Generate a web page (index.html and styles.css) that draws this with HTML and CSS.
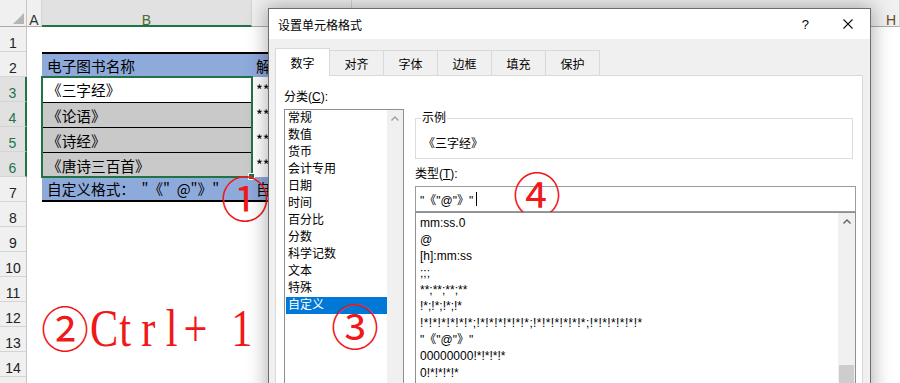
FILE: index.html
```html
<!DOCTYPE html>
<html lang="zh-CN">
<head>
<meta charset="utf-8">
<title>设置单元格格式</title>
<link rel="stylesheet" href="styles.css">
</head>
<body>
<div class="screen">
  <div class="sheet">
    <div class="corner"><span class="tri"></span></div>
    <div class="ch">A</div>
    <div class="ch sel">B</div>
    <div class="ch"></div>
    <div class="ch rest">H</div>

    <div class="rh">1</div><div class="c"></div><div class="c"></div><div class="c"></div><div class="c"></div>
    <div class="rh">2</div><div class="c"></div><div class="c txt blue t2">电子图书名称</div><div class="c txt cc blue t2">解</div><div class="c"></div>
    <div class="rh on">3</div><div class="c"></div><div class="c txt">《三字经》</div><div class="c txt cc">**</div><div class="c"></div>
    <div class="rh on">4</div><div class="c"></div><div class="c txt grey">《论语》</div><div class="c txt cc">**</div><div class="c"></div>
    <div class="rh on">5</div><div class="c"></div><div class="c txt grey">《诗经》</div><div class="c txt cc">**</div><div class="c"></div>
    <div class="rh on">6</div><div class="c"></div><div class="c txt grey">《唐诗三百首》</div><div class="c txt cc">**</div><div class="c"></div>
    <div class="rh">7</div><div class="c"></div><div class="c txt blue b2">自定义格式：&nbsp;&nbsp;"《"&nbsp;&nbsp;@"》"</div><div class="c txt cc blue b2">自</div><div class="c"></div>
    <div class="rh">8</div><div class="c"></div><div class="c"></div><div class="c"></div><div class="c"></div>
    <div class="rh">9</div><div class="c"></div><div class="c"></div><div class="c"></div><div class="c"></div>
    <div class="rh">10</div><div class="c"></div><div class="c"></div><div class="c"></div><div class="c"></div>
    <div class="rh">11</div><div class="c"></div><div class="c"></div><div class="c"></div><div class="c"></div>
    <div class="rh">12</div><div class="c"></div><div class="c"></div><div class="c"></div><div class="c"></div>
    <div class="rh">13</div><div class="c"></div><div class="c"></div><div class="c"></div><div class="c"></div>
    <div class="rh">14</div><div class="c"></div><div class="c"></div><div class="c"></div><div class="c"></div>
    <div class="rh"></div><div class="c"></div><div class="c"></div><div class="c"></div><div class="c"></div>
  </div>

  <div class="selbox"></div>
  <div class="handle"></div>

  <div class="anno a1">①</div>
  <div class="anno a2"><span class="circ">②</span><span class="ctrl"><span>C</span><span>t</span><span>r</span><span>l</span><span>+</span><span>&nbsp;</span><span>1</span></span></div>

  <div class="dialog">
    <div class="titlebar">
      <span class="title">设置单元格格式</span>
      <span class="help">?</span>
      <svg class="close" width="10" height="10" viewBox="0 0 10 10"><path d="M0.5 0.5 L9.5 9.5 M9.5 0.5 L0.5 9.5" stroke="#111" stroke-width="1.1" fill="none"/></svg>
    </div>
    <div class="dbody">
      <div class="tabs">
        <div class="tab active">数字</div>
        <div class="tab">对齐</div>
        <div class="tab">字体</div>
        <div class="tab">边框</div>
        <div class="tab">填充</div>
        <div class="tab">保护</div>
      </div>
      <div class="panel">
        <div class="catcol">
          <div class="lbl">分类(<u>C</u>):</div>
          <div class="listbox catlist">
            <div class="items">
              <div class="item">常规</div>
              <div class="item">数值</div>
              <div class="item">货币</div>
              <div class="item">会计专用</div>
              <div class="item">日期</div>
              <div class="item">时间</div>
              <div class="item">百分比</div>
              <div class="item">分数</div>
              <div class="item">科学记数</div>
              <div class="item">文本</div>
              <div class="item">特殊</div>
              <div class="item sel">自定义</div>
            </div>
            <div class="vscroll">
              <div class="arrow"><svg width="8" height="5" viewBox="0 0 8 5"><path d="M0.5 4.5 L4 1 L7.5 4.5" stroke="#a0a0a0" stroke-width="1.4" fill="none"/></svg></div>
            </div>
          </div>
        </div>
        <div class="rightcol">
          <fieldset class="sample">
            <legend>示例</legend>
            <div class="sampletext">《三字经》</div>
          </fieldset>
          <div class="lbl typelbl">类型(<u>T</u>):</div>
          <div class="typeinput"><span>"《"@"》"</span><span class="caret"></span></div>
          <div class="listbox typelist">
            <div class="items titems">
              <div class="titem">mm:ss.0</div>
              <div class="titem">@</div>
              <div class="titem">[h]:mm:ss</div>
              <div class="titem">;;;</div>
              <div class="titem">**;**;**;**</div>
              <div class="titem">!*;!*;!*;!*</div>
              <div class="titem wide">!*!*!*!*!*!*;!*!*!*!*!*!*;!*!*!*!*!*!*;!*!*!*!*!*!*</div>
              <div class="titem">"《"@"》"</div>
              <div class="titem">00000000!*!*!*!*</div>
              <div class="titem">0!*!*!*!*</div>
            </div>
            <div class="vscroll tscroll">
              <div class="arrow"><svg width="8" height="5" viewBox="0 0 8 5"><path d="M0.5 4.5 L4 1 L7.5 4.5" stroke="#606060" stroke-width="1.4" fill="none"/></svg></div>
              <div class="track"></div>
              <div class="thumb"></div>
            </div>
          </div>
        </div>
      </div>
    </div>
  </div>

  <div class="anno a3">③</div>
  <div class="anno a4">④</div>
</div>
</body>
</html>
```

FILE: styles.css
```css
* { box-sizing: border-box; }
html, body { margin: 0; padding: 0; }
body {
  width: 900px;
  height: 383px;
  overflow: hidden;
  background: #fff;
  font-family: "Liberation Sans", "Noto Sans CJK SC", sans-serif;
}
.screen {
  position: relative;
  width: 900px;
  height: 383px;
  overflow: hidden;
}

/* ---------- spreadsheet ---------- */
.sheet {
  display: grid;
  grid-template-columns: 27px 15px 210px 100px 1fr;
  grid-template-rows: 27px repeat(15, 25px);
  font-family: "Noto Sans CJK SC", sans-serif;
  font-size: 14.67px;
  color: #000;
}
.corner {
  background: #f0f0f0;
  border-right: 1px solid #c6c6c6;
  border-bottom: 1px solid #ababab;
  display: flex;
  justify-content: flex-end;
  align-items: flex-end;
  padding: 0 2px 2px 0;
}
.tri {
  width: 0;
  height: 0;
  border-left: 11px solid transparent;
  border-bottom: 11px solid #b5b5b5;
}
.ch {
  background: #f0f0f0;
  border-right: 1px solid #d4d4d4;
  border-bottom: 1px solid #ababab;
  font-family: "Liberation Sans", sans-serif;
  font-size: 14px;
  line-height: 14px;
  padding-top: 13px;
  text-align: center;
  color: #333;
}
.ch.sel {
  background: #e1e1e1;
  border-bottom: 2px solid #217346;
  color: #4f6a28;
}
.ch.rest {
  text-align: right;
  padding-right: 3px;
  color: #6b4a1e;
}
.rh {
  background: #f0f0f0;
  border-right: 1px solid #c6c6c6;
  border-bottom: 1px solid #d4d4d4;
  font-family: "Liberation Sans", sans-serif;
  font-size: 14px;
  line-height: 14px;
  padding-top: 9px;
  text-align: center;
  color: #222;
}
.rh.on {
  background: #e1e1e1;
  color: #217346;
  border-right: 2px solid #217346;
}
.c { background: #fff; }
.txt {
  display: flex;
  align-items: center;
  padding-left: 5px;
  white-space: nowrap;
  overflow: hidden;
}
.cc { padding-left: 4px; }
.blue { background: #8eaadb; }
.t2 { border-top: 2px solid #000; }
.b2 { border-bottom: 2px solid #000; }
.grey { background: #c9c9c9; border-top: 1px solid #000; }

.selbox {
  position: absolute;
  left: 41px;
  top: 76px;
  width: 212px;
  height: 102px;
  border: 2px solid #217346;
}
.handle {
  position: absolute;
  left: 248px;
  top: 173px;
  width: 7px;
  height: 7px;
  background: #217346;
  border: 1px solid #fff;
}

/* ---------- annotations ---------- */
.anno {
  position: absolute;
  color: #f01818;
  font-family: "Noto Sans CJK SC", sans-serif;
  font-size: 48px;
  line-height: 48px;
}
.a1 { left: 221px; top: 172px; }
.a2 { left: 41px; top: 300px; display: flex; align-items: center; }
.a3 { left: 331px; top: 300px; }
.a4 { left: 513px; top: 168px; z-index: 1; }
.ctrl {
  display: inline-flex;
  font-family: "Liberation Serif", serif;
  font-size: 53px;
  line-height: 48px;
  transform: scaleX(0.8);
  transform-origin: left center;
  margin-left: 1px;
  margin-top: 4px;
}
.ctrl span {
  width: 29.2px;
  text-align: center;
}

/* ---------- dialog ---------- */
.dialog {
  position: absolute;
  left: 268px;
  top: 8px;
  width: 603px;
  height: 400px;
  background: #f0f0f0;
  border: 1px solid #6d6d6d;
  box-shadow: 0 0 18px 2px rgba(0, 0, 0, 0.3);
  display: flex;
  flex-direction: column;
  font-size: 12px;
  color: #000;
}
.titlebar {
  flex: none;
  height: 30px;
  background: #fff;
  display: flex;
  align-items: center;
  padding: 0 17px 0 9px;
}
.title { flex: 1; }
.help { font-size: 13px; margin-right: 34px; }
.close { display: block; }
.dbody {
  flex: 1;
  display: flex;
  flex-direction: column;
  padding: 9px 7px 0 6px;
}
.tabs {
  display: flex;
  align-items: flex-end;
  height: 27px;
}
.tab {
  width: 54px;
  height: 25px;
  background: #f0f0f0;
  border-top: 1px solid #d9d9d9;
  border-right: 1px solid #d9d9d9;
  display: flex;
  align-items: center;
  justify-content: center;
}
.tab.active {
  position: relative;
  width: 55px;
  height: 28px;
  margin-bottom: -1px;
  background: #fff;
  border-left: 1px solid #d9d9d9;
  padding-bottom: 1px;
}
.panel {
  flex: 1;
  background: #fff;
  border: 1px solid #d9d9d9;
  display: flex;
  gap: 11px;
  padding: 13px 6px 0 8px;
}
.catcol {
  width: 120px;
  display: flex;
  flex-direction: column;
}
.lbl {
  height: 17px;
  line-height: 17px;
}
.listbox {
  background: #fff;
  display: flex;
}
.catlist {
  margin-top: 3px;
  flex: 1;
  border: 1px solid #8f8f8f;
}
.items { flex: 1; }
.item {
  height: 17px;
  line-height: 17px;
  margin-left: 1px;
  padding-left: 2px;
  white-space: nowrap;
}
.item.sel { background: #0078d7; color: #fff; }
.vscroll {
  width: 16px;
  background: #f0f0f0;
  display: flex;
  flex-direction: column;
}
.arrow {
  height: 17px;
  flex: none;
  display: flex;
  align-items: center;
  justify-content: center;
}
.rightcol {
  flex: 1;
  display: flex;
  flex-direction: column;
}
.sample {
  margin: 23px 0 0 0;
  padding: 0 0 5px 5px;
  border: 1px solid #dcdcdc;
  width: 438px;
  min-width: 0;
}
.sample legend {
  padding: 0 1px;
  line-height: 12px;
  font-size: 12px;
}
.sampletext {
  margin-top: 12px;
  margin-left: 2px;
  height: 17px;
  line-height: 17px;
}
.typelbl { margin-top: 7px; }
.typeinput {
  margin-top: 3px;
  height: 26px;
  border: 1px solid #9a9aa2;
  display: flex;
  align-items: center;
  padding-left: 4px;
  white-space: pre;
}
.caret {
  width: 1px;
  height: 14px;
  background: #000;
  margin-left: 3px;
}
.typelist {
  position: relative;
  z-index: 2;
  flex: 1;
  border: 1px solid #8f8f8f;
}
.titems { padding: 2px 0 0 4px; }
.titem {
  height: 16.67px;
  line-height: 16.67px;
  white-space: nowrap;
}
.titem.wide { letter-spacing: 0.4px; }
.tscroll { width: 17px; }
.track { height: 135px; flex: none; }
.thumb { margin: 0 1px; flex: 1; background: #cdcdcd; }
```
